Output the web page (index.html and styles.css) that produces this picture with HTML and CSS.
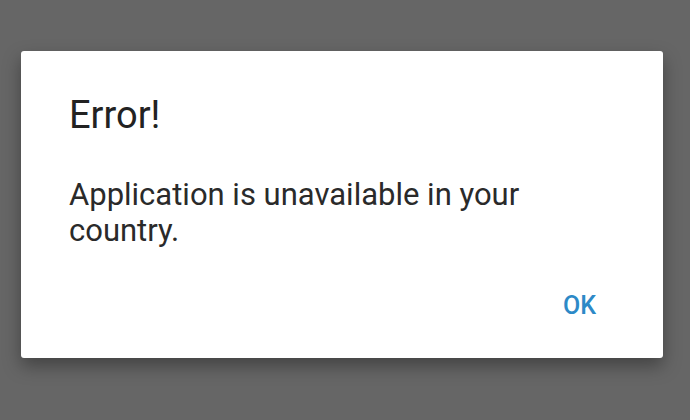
FILE: index.html
```html
<!DOCTYPE html>
<html>
<head>
<meta charset="utf-8">
<link rel="stylesheet" href="styles.css">
</head>
<body>
<div class="overlay">
  <div class="dialog">
    <div class="title">Error!</div>
    <div class="message">Application is unavailable in your country.</div>
    <div class="actions"><span class="btn">OK</span></div>
  </div>
</div>
</body>
</html>
```
FILE: styles.css
```css
html, body {
  margin: 0;
  padding: 0;
  width: 690px;
  height: 420px;
  overflow: hidden;
  background: #666666;
  font-family: Roboto, "Noto Sans", sans-serif;
}
.overlay {
  padding: 51px 0 0 21px;
}
.dialog {
  width: 642px;
  height: 307px;
  box-sizing: border-box;
  background: #ffffff;
  border-radius: 3px;
  box-shadow: 0 8px 18px rgba(0, 0, 0, 0.35);
  padding: 42px 67px 0 48px;
  display: flex;
  flex-direction: column;
}
.title {
  font-size: 38px;
  line-height: 44px;
  color: #222222;
}
.message {
  margin-top: 40px;
  font-size: 31px;
  line-height: 36px;
  color: #2a2a2a;
  width: 490px;
}
.actions {
  margin-top: 42px;
  display: flex;
  justify-content: flex-end;
}
.btn {
  font-size: 25px;
  line-height: 30px;
  font-weight: 500;
  color: #2d89c7;
}
```
